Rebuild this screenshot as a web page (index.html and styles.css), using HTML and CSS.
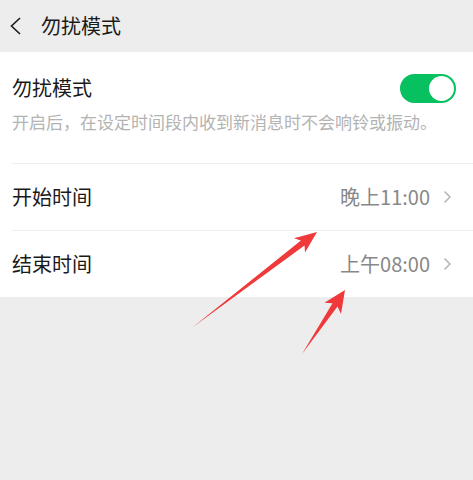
FILE: index.html
```html
<!DOCTYPE html>
<html lang="zh-CN">
  <head>
    <meta charset="UTF-8" />
    <meta name="viewport" content="width=device-width, initial-scale=1.0" />
    <title>勿扰模式</title>
    <link rel="stylesheet" href="styles.css">
  </head>
  <body>
    <div class="page">
      <div class="topbar">
        <svg class="back" width="13" height="20" viewBox="0 0 13 20">
          <path d="M11 2 L2.5 10 L11 18" fill="none" stroke="#1a1a1a" stroke-width="1.6" />
        </svg>
        <span class="topbar-title">勿扰模式</span>
      </div>

      <div class="section">
        <div class="switch-item">
          <div class="switch-row">
            <span class="label">勿扰模式</span>
            <div class="toggle on"><span class="knob"></span></div>
          </div>
          <p class="hint">开启后，在设定时间段内收到新消息时不会响铃或振动。</p>
        </div>
        <div class="list">
          <div class="row">
            <span class="label">开始时间</span>
            <span class="value">晚上11:00</span>
            <svg class="arrow-right" width="9" height="14" viewBox="0 0 9 14">
              <path d="M1.5 1.5 L7 7 L1.5 12.5" fill="none" stroke="#b5b5b5" stroke-width="1.5" />
            </svg>
          </div>
          <div class="row">
            <span class="label">结束时间</span>
            <span class="value">上午08:00</span>
            <svg class="arrow-right" width="9" height="14" viewBox="0 0 9 14">
              <path d="M1.5 1.5 L7 7 L1.5 12.5" fill="none" stroke="#b5b5b5" stroke-width="1.5" />
            </svg>
          </div>
        </div>
      </div>

      <!-- red annotation arrows drawn over the screenshot -->
      <svg class="marks" width="473" height="480" viewBox="0 0 473 480">
        <polygon points="193,327 304.5,245.4 305,252.6 317,232 294,238.2 300.9,240.6" fill="#f0393a" />
        <polygon points="302,354 337.5,306.6 341,313.9 345,290 324.4,302.7 332.5,303.2" fill="#f0393a" />
      </svg>
    </div>
  </body>
</html>
```

FILE: styles.css
```css
body {
  margin: 0;
  background-color: #ededed;
  font-family: "Noto Sans CJK SC", "Noto Sans", sans-serif;
  color: #1a1a1a;
}
.page {
  position: relative;
  width: 473px;
  height: 480px;
  overflow: hidden;
}
.topbar {
  height: 52px;
  display: flex;
  align-items: center;
  padding-left: 9px;
}
.back {
  display: block;
}
.topbar-title {
  margin-left: 19px;
  font-size: 20px;
  line-height: 28px;
}
.section {
  background-color: #fff;
}
.switch-item {
  padding: 21px 17px 24px 12px;
  height: 66px;
}
.switch-row {
  display: flex;
  align-items: center;
  justify-content: space-between;
  height: 30px;
}
.label {
  font-size: 20px;
  line-height: 28px;
}
.toggle {
  width: 56px;
  height: 29px;
  border-radius: 15px;
  background-color: #07c160;
  position: relative;
}
.toggle .knob {
  position: absolute;
  top: 2px;
  right: 2px;
  width: 25px;
  height: 25px;
  border-radius: 50%;
  background-color: #fff;
}
.hint {
  margin: 7px 0 0;
  font-size: 17px;
  line-height: 24px;
  color: #b3b3b3;
}
.list {
  padding-left: 12px;
}
.row {
  display: flex;
  align-items: center;
  height: 67px;
  padding-right: 21px;
  border-top: 1px solid #efefef;
  box-sizing: border-box;
}
.row .label {
  flex: 1;
}
.value {
  font-size: 20px;
  line-height: 28px;
  color: #888;
  margin-right: 13px;
}
.arrow-right {
  display: block;
}
.marks {
  position: absolute;
  top: 0;
  left: 0;
  pointer-events: none;
}
```
